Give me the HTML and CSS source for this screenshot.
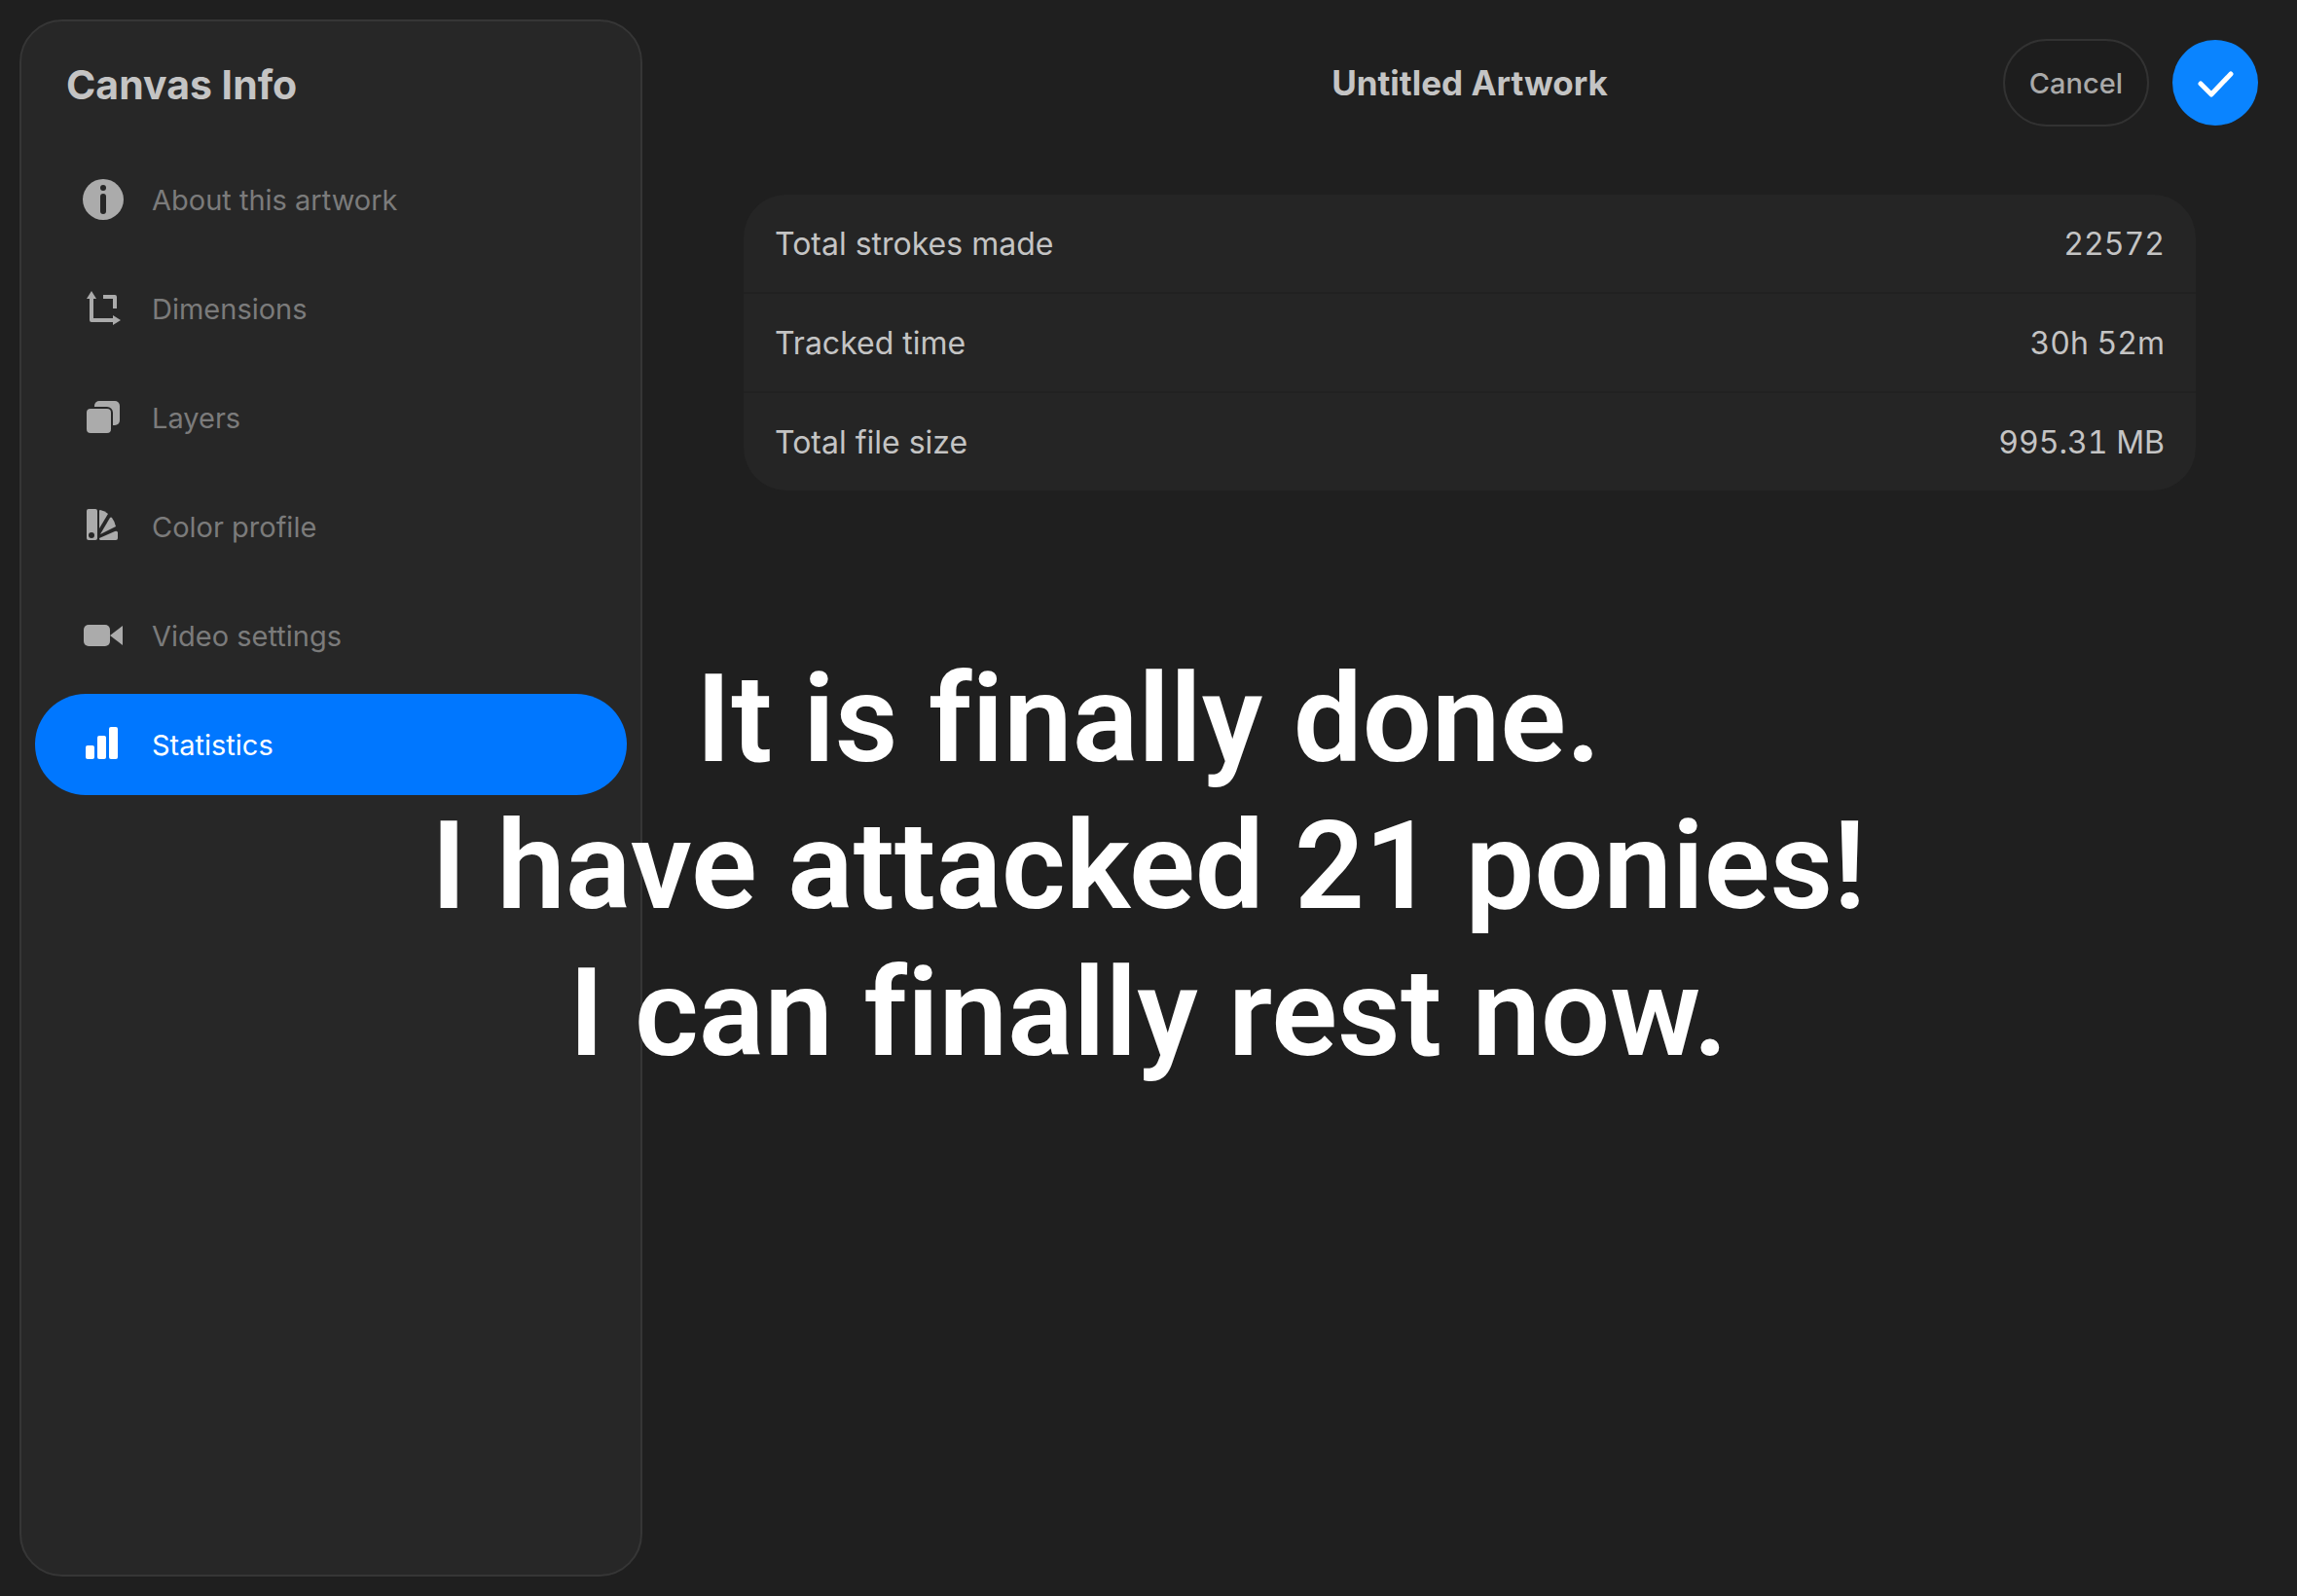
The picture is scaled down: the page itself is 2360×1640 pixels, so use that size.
FILE: index.html
```html
<!DOCTYPE html>
<html lang="en">
<head>
    <meta charset="UTF-8">
    <meta name="viewport" content="width=device-width, initial-scale=1.0">
    <title>Canvas Info</title>
    <link rel="stylesheet" href="styles.css">
</head>
<body>
    <div class="app">
        <aside class="sidebar">
            <h1>Canvas Info</h1>
            <nav class="menu">
                <a href="#about" class="menu-item">
                    <svg class="icon" viewBox="0 0 44 44" aria-hidden="true">
                        <circle class="fill" cx="22" cy="22" r="21"/>
                        <circle class="hole" cx="22" cy="10" r="3"/>
                        <rect class="hole" x="19" y="16" width="6" height="21" rx="3"/>
                    </svg>
                    About this artwork
                </a>
                <a href="#dimensions" class="menu-item">
                    <svg class="icon" viewBox="0 0 44 44" aria-hidden="true">
                        <path class="line" d="M10 11v23h25M22 10h12v12"/>
                        <path class="fill" d="M10 4l5 8H5zM40 34l-8 5V29z"/>
                    </svg>
                    Dimensions
                </a>
                <a href="#layers" class="menu-item">
                    <svg class="icon" viewBox="0 0 44 44" aria-hidden="true">
                        <rect class="fill" x="13" y="5" width="26" height="25" rx="5"/>
                        <rect class="card-front" x="4" y="12" width="27" height="27" rx="5"/>
                    </svg>
                    Layers
                </a>
                <a href="#color" class="menu-item">
                    <svg class="icon" viewBox="0 0 44 44" aria-hidden="true">
                        <rect class="fill" x="5" y="4" width="11" height="32" rx="2"/>
                        <circle class="hole" cx="10" cy="31" r="3"/>
                        <path class="fill" d="M18 6q0-1 1-1 5 1 8 4l-9 15z"/>
                        <path class="fill" d="M29 13q1-1 2 0 3 4 4 9L19 30z"/>
                        <path class="fill" d="M18 34l16-7q2-1 3 1v6q0 2-2 2H19q-1 0-1-2z"/>
                    </svg>
                    Color profile
                </a>
                <a href="#video" class="menu-item">
                    <svg class="icon" viewBox="0 0 44 44" aria-hidden="true">
                        <rect class="fill" x="2" y="11" width="27" height="22" rx="5"/>
                        <path class="fill" d="M42 12v20L29 22z"/>
                    </svg>
                    Video settings
                </a>
                <a href="#statistics" class="menu-item active" aria-current="page">
                    <svg class="icon" viewBox="0 0 44 44" aria-hidden="true">
                        <rect class="fill" x="4" y="23" width="9" height="14" rx="2"/>
                        <rect class="fill" x="16" y="13" width="9" height="24" rx="2"/>
                        <rect class="fill" x="28" y="4" width="9" height="33" rx="2"/>
                    </svg>
                    Statistics
                </a>
            </nav>
        </aside>

        <main class="content">
            <header class="topbar">
                <h2>Untitled Artwork</h2>
                <div class="actions">
                    <button type="button" class="cancel">Cancel</button>
                    <button type="button" class="confirm" aria-label="Done">
                        <svg class="check" viewBox="0 0 44 44" aria-hidden="true">
                            <path d="M7 23l11 11L38 13"/>
                        </svg>
                    </button>
                </div>
            </header>

            <dl class="stats">
                <div class="row"><dt>Total strokes made</dt><dd>22572</dd></div>
                <div class="row"><dt>Tracked time</dt><dd>30h 52m</dd></div>
                <div class="row"><dt>Total file size</dt><dd>995.31 MB</dd></div>
            </dl>
        </main>
    </div>

    <!-- caption lies over both columns -->
    <p class="caption">It is finally done.<br>I have attacked 21 ponies!<br>I can finally rest now.</p>
</body>
</html>
```
FILE: styles.css
```css
* {
    margin: 0;
    padding: 0;
    box-sizing: border-box;
}
body {
    font-family: Inter, "Liberation Sans", sans-serif;
    background-color: #1f1f1f;
    color: #c4c4c4;
    position: relative;
}
.app {
    display: flex;
    min-height: 100vh;
    padding: 20px 0;
}

/* Sidebar */
.sidebar {
    width: 640px;
    flex-shrink: 0;
    margin-left: 20px;
    padding: 0 14px;
    background-color: #272727;
    border: 2px solid #363636;
    border-radius: 44px;
}
h1 {
    padding: 40px 32px 0;
    font-size: 41px;
    line-height: 50px;
    font-weight: 700;
}
.menu {
    display: flex;
    flex-direction: column;
    gap: 8px;
    margin-top: 41px;
}
.menu-item {
    display: flex;
    align-items: center;
    gap: 28px;
    height: 104px;
    padding: 0 48px;
    border-radius: 52px;
    color: #7b7b7b;
    font-size: 29px;
    text-decoration: none;
}
.menu-item.active {
    background-color: #0077ff;
    color: #fff;
}
.icon {
    width: 44px;
    height: 44px;
    color: #ababab;
}
.active .icon {
    color: #fff;
}
.fill {
    fill: currentColor;
}
.hole {
    fill: #272727;
}
.line {
    fill: none;
    stroke: currentColor;
    stroke-width: 4;
    stroke-linejoin: round;
}
.card-front {
    fill: currentColor;
    stroke: #272727;
    stroke-width: 2;
}

/* Right side */
.content {
    flex: 1;
}
.topbar {
    display: grid;
    grid-template-columns: 1fr auto 1fr;
    align-items: center;
    padding: 20px 40px 0;
}
h2 {
    grid-column: 2;
    font-size: 35px;
    font-weight: 700;
}
.actions {
    display: flex;
    align-items: center;
    justify-content: flex-end;
    gap: 24px;
}
button {
    font-family: inherit;
    cursor: pointer;
}
.cancel {
    height: 90px;
    padding: 0 25px;
    background-color: #1d1d1d;
    border: 2px solid #323232;
    border-radius: 45px;
    color: #a9a9a9;
    font-size: 29px;
    font-weight: 500;
}
.confirm {
    display: flex;
    align-items: center;
    justify-content: center;
    width: 88px;
    height: 88px;
    background-color: #0a84ff;
    border: none;
    border-radius: 50%;
}
.check {
    width: 44px;
    height: 44px;
    fill: none;
    stroke: #fff;
    stroke-width: 5;
    stroke-linecap: round;
    stroke-linejoin: round;
}
.stats {
    margin: 70px 104px 0;
    background-color: #252525;
    border-radius: 44px;
}
.row {
    display: flex;
    align-items: center;
    justify-content: space-between;
    height: 100px;
    padding: 0 32px;
    font-size: 32px;
}
.row + .row {
    height: 102px;
    border-top: 2px solid #212121;
}
.row dd {
    font-variant-numeric: tabular-nums;
}

/* Overlay text */
.caption {
    position: absolute;
    top: 664px;
    left: 0;
    width: 100%;
    color: #fff;
    font-family: Roboto, sans-serif;
    font-size: 126px;
    font-weight: 600;
    line-height: 151px;
    text-align: center;
    font-variant-ligatures: none;
    pointer-events: none;
}
```
